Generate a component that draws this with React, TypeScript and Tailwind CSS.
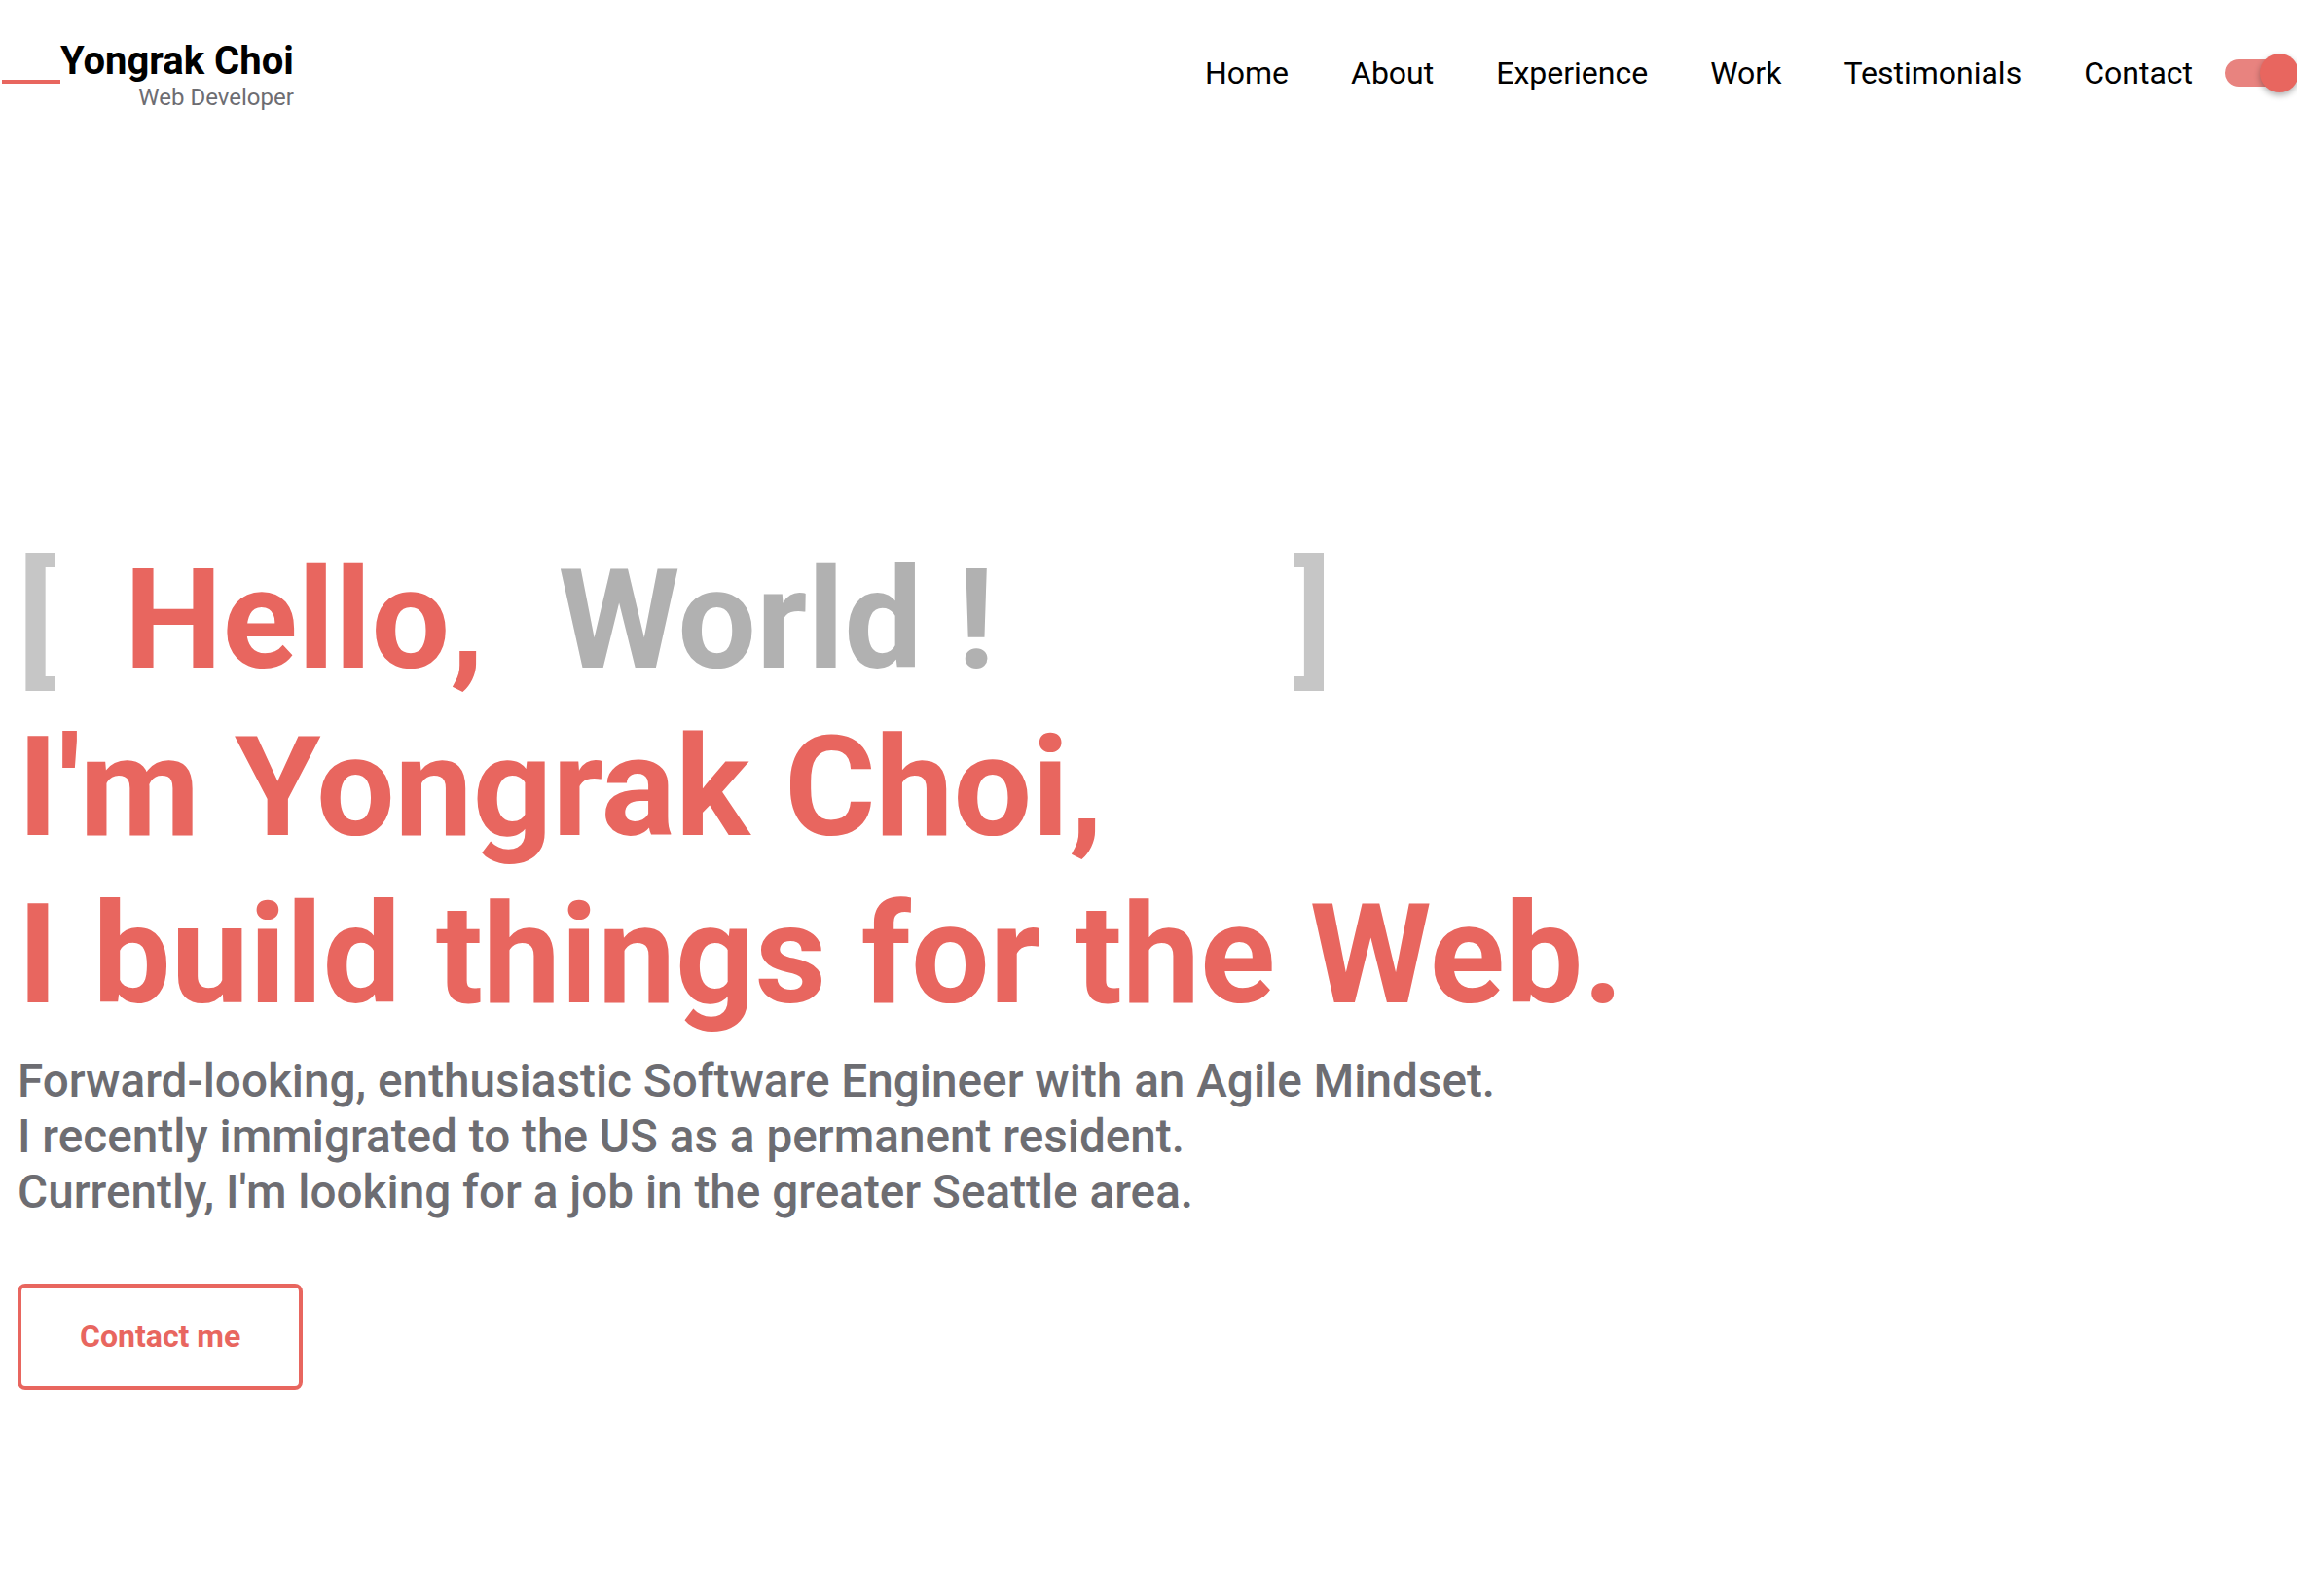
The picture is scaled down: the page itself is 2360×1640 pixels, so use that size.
import { useState } from "react";

const navLinks = ["Home", "About", "Experience", "Work", "Testimonials", "Contact"];

function ThemeToggle() {
  const [on, setOn] = useState(true);
  return (
    <button
      onClick={() => setOn(!on)}
      className="relative ml-[33px] h-10 w-[74px] shrink-0"
      aria-label="toggle theme"
    >
      <span className="absolute left-0 top-[6px] h-[28px] w-[68px] rounded-full bg-[#e8837f]" />
      <span
        className={`absolute top-0 h-10 w-10 rounded-full bg-[#e8665f] shadow-[0_3px_6px_rgba(0,0,0,0.3)] ${
          on ? "right-[-2px]" : "left-0"
        }`}
      />
    </button>
  );
}

function Header() {
  return (
    <header className="flex items-center justify-between pt-[39px]">
      {/* Logo */}
      <div className="flex items-start">
        <div className="ml-[2px] mt-[43px] h-1 w-[60px] bg-[#e8665f]" />
        <div className="flex flex-col items-end">
          <span className="text-[40px] font-bold leading-[48px] text-black">Yongrak Choi</span>
          <span className="text-[24px] leading-[27px] text-[#6d6d72]">Web Developer</span>
        </div>
      </div>

      <nav className="mb-[3px] flex items-center">
        <ul className="flex items-center gap-16">
          {navLinks.map((link) => (
            <li key={link}>
              <a href={`#${link.toLowerCase()}`} className="text-[32px] leading-[38px] text-black">
                {link}
              </a>
            </li>
          ))}
        </ul>
        <ThemeToggle />
      </nav>
    </header>
  );
}

function Hero() {
  return (
    <section className="pl-[18px] pt-[437px]">
      <h1 className="text-[143px] font-bold leading-[172px] text-[#e8665f]">
        <span className="block whitespace-nowrap">
          <span className="text-[#c6c6c6]">[</span>
          <span className="ml-[70px]">Hello,</span>
          <span className="ml-[76px] text-[#b1b1b1]">World !</span>
          <span className="ml-[307px] text-[#c6c6c6]">]</span>
        </span>
        <span className="block whitespace-nowrap">I'm Yongrak Choi,</span>
        <span className="block whitespace-nowrap">I build things for the Web.</span>
      </h1>

      <p className="mt-4 text-[47.7px] font-medium leading-[57.2px] text-[#6d6d72]">
        Forward-looking, enthusiastic Software Engineer with an Agile Mindset.
        <br />
        I recently immigrated to the US as a permanent resident.
        <br />
        Currently, I'm looking for a job in the greater Seattle area.
      </p>

      <button className="mt-16 flex h-[109px] items-center rounded-lg border-4 border-[#e8665f] px-[60px] text-[32px] font-bold text-[#e8665f]">
        Contact me
      </button>
    </section>
  );
}

export default function App() {
  return (
    <div className="min-h-screen overflow-x-hidden bg-white font-['Roboto',sans-serif]">
      <Header />
      <Hero />
    </div>
  );
}
